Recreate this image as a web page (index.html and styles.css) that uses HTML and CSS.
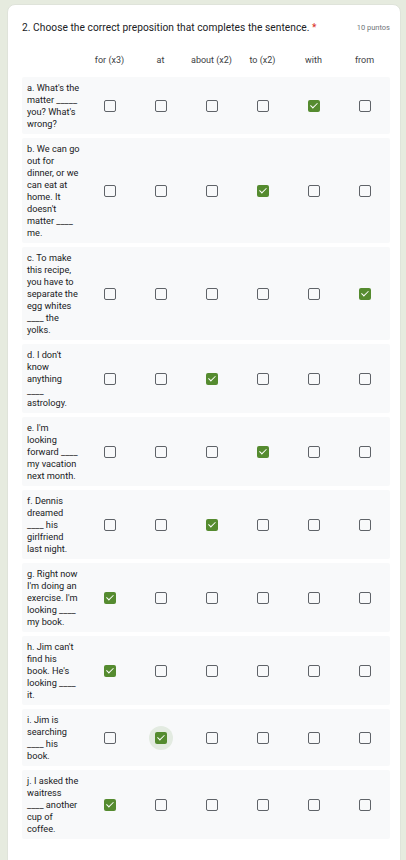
FILE: index.html
```html
<!DOCTYPE html>
<html lang="es">
<head>
<meta charset="utf-8">
<title>Pregunta 2</title>
<link rel="stylesheet" href="styles.css">
</head>
<body>
<div class="card">
  <div class="title-row">
    <div class="title">2. Choose the correct preposition that completes the sentence. <span class="req">*</span></div>
    <div class="points">10 puntos</div>
  </div>
  <div class="grid">
    <div class="head">
      <span></span><span>for (x3)</span><span>at</span><span>about (x2)</span><span>to (x2)</span><span>with</span><span>from</span>
    </div>
    <div class="row"><div class="label">a. What's the<br>matter _____<br>you? What's<br>wrong?</div><span class="cb"></span><span class="cb"></span><span class="cb"></span><span class="cb"></span><span class="cb on"></span><span class="cb"></span></div>
    <div class="row"><div class="label">b. We can go<br>out for<br>dinner, or we<br>can eat at<br>home. It<br>doesn't<br>matter ____<br>me.</div><span class="cb"></span><span class="cb"></span><span class="cb"></span><span class="cb on"></span><span class="cb"></span><span class="cb"></span></div>
    <div class="row"><div class="label">c. To make<br>this recipe,<br>you have to<br>separate the<br>egg whites<br>____ the<br>yolks.</div><span class="cb"></span><span class="cb"></span><span class="cb"></span><span class="cb"></span><span class="cb"></span><span class="cb on"></span></div>
    <div class="row"><div class="label">d. I don't<br>know<br>anything<br>____<br>astrology.</div><span class="cb"></span><span class="cb"></span><span class="cb on"></span><span class="cb"></span><span class="cb"></span><span class="cb"></span></div>
    <div class="row"><div class="label">e. I'm<br>looking<br>forward ____<br>my vacation<br>next month.</div><span class="cb"></span><span class="cb"></span><span class="cb"></span><span class="cb on"></span><span class="cb"></span><span class="cb"></span></div>
    <div class="row"><div class="label">f. Dennis<br>dreamed<br>____ his<br>girlfriend<br>last night.</div><span class="cb"></span><span class="cb"></span><span class="cb on"></span><span class="cb"></span><span class="cb"></span><span class="cb"></span></div>
    <div class="row"><div class="label">g. Right now<br>I'm doing an<br>exercise. I'm<br>looking ____<br>my book.</div><span class="cb on"></span><span class="cb"></span><span class="cb"></span><span class="cb"></span><span class="cb"></span><span class="cb"></span></div>
    <div class="row"><div class="label">h. Jim can't<br>find his<br>book. He's<br>looking ____<br>it.</div><span class="cb on"></span><span class="cb"></span><span class="cb"></span><span class="cb"></span><span class="cb"></span><span class="cb"></span></div>
    <div class="row"><div class="label">i. Jim is<br>searching<br>____ his<br>book.</div><span class="cb"></span><span class="cb on focus"></span><span class="cb"></span><span class="cb"></span><span class="cb"></span><span class="cb"></span></div>
    <div class="row"><div class="label">j. I asked the<br>waitress<br>____ another<br>cup of<br>coffee.</div><span class="cb on"></span><span class="cb"></span><span class="cb"></span><span class="cb"></span><span class="cb"></span><span class="cb"></span></div>
  </div>
</div>
</body>
</html>
```
FILE: styles.css
```css
html, body {
  margin: 0;
  padding: 0;
}
body {
  background: #e6ebdf;
  font-family: Roboto, "Liberation Sans", sans-serif;
  color: #202124;
  height: 860px;
  overflow: hidden;
}
.card {
  margin: 4px 5px 0 7px;
  background: #fff;
  border: 1px solid #dfe3da;
  border-radius: 8px;
  padding: 14px 10px 40px 14px;
  min-height: 900px;
  box-sizing: border-box;
}
.title-row {
  display: flex;
  justify-content: space-between;
  align-items: center;
  height: 16px;
}
.title {
  font-size: 10.2px;
  letter-spacing: 0.05px;
}
.req {
  color: #d93025;
}
.points {
  font-size: 7.5px;
  color: #70757a;
}
.grid {
  margin-top: 17px;
  display: flex;
  flex-direction: column;
  gap: 4px;
  width: 368px;
}
.head {
  display: grid;
  grid-template-columns: 62px repeat(6, 51px);
  font-size: 9px;
  color: #3c4043;
  text-align: center;
  height: 16px;
  line-height: 16px;
  margin-bottom: 5px;
}
.row {
  display: grid;
  grid-template-columns: 62px repeat(6, 51px);
  align-items: center;
  justify-items: center;
  background: #f8f9fa;
  border-radius: 2px;
}
.label {
  justify-self: stretch;
  font-size: 9.2px;
  line-height: 12px;
  padding: 5px 0 4px 5px;
  white-space: nowrap;
  color: #202124;
}
.cb {
  width: 12px;
  height: 12px;
  box-sizing: border-box;
  border: 1.6px solid #5f6368;
  border-radius: 2px;
  position: relative;
}
.cb.on {
  border: none;
  background: #558b2f;
}
.cb.on::after {
  content: "";
  position: absolute;
  left: 4.2px;
  top: 1.6px;
  width: 2.6px;
  height: 6px;
  border: solid #fff;
  border-width: 0 1.8px 1.8px 0;
  transform: rotate(45deg);
}
.cb.focus::before {
  content: "";
  position: absolute;
  left: -6px;
  top: -6px;
  width: 24px;
  height: 24px;
  border-radius: 50%;
  background: rgba(85, 139, 47, 0.12);
}
```
